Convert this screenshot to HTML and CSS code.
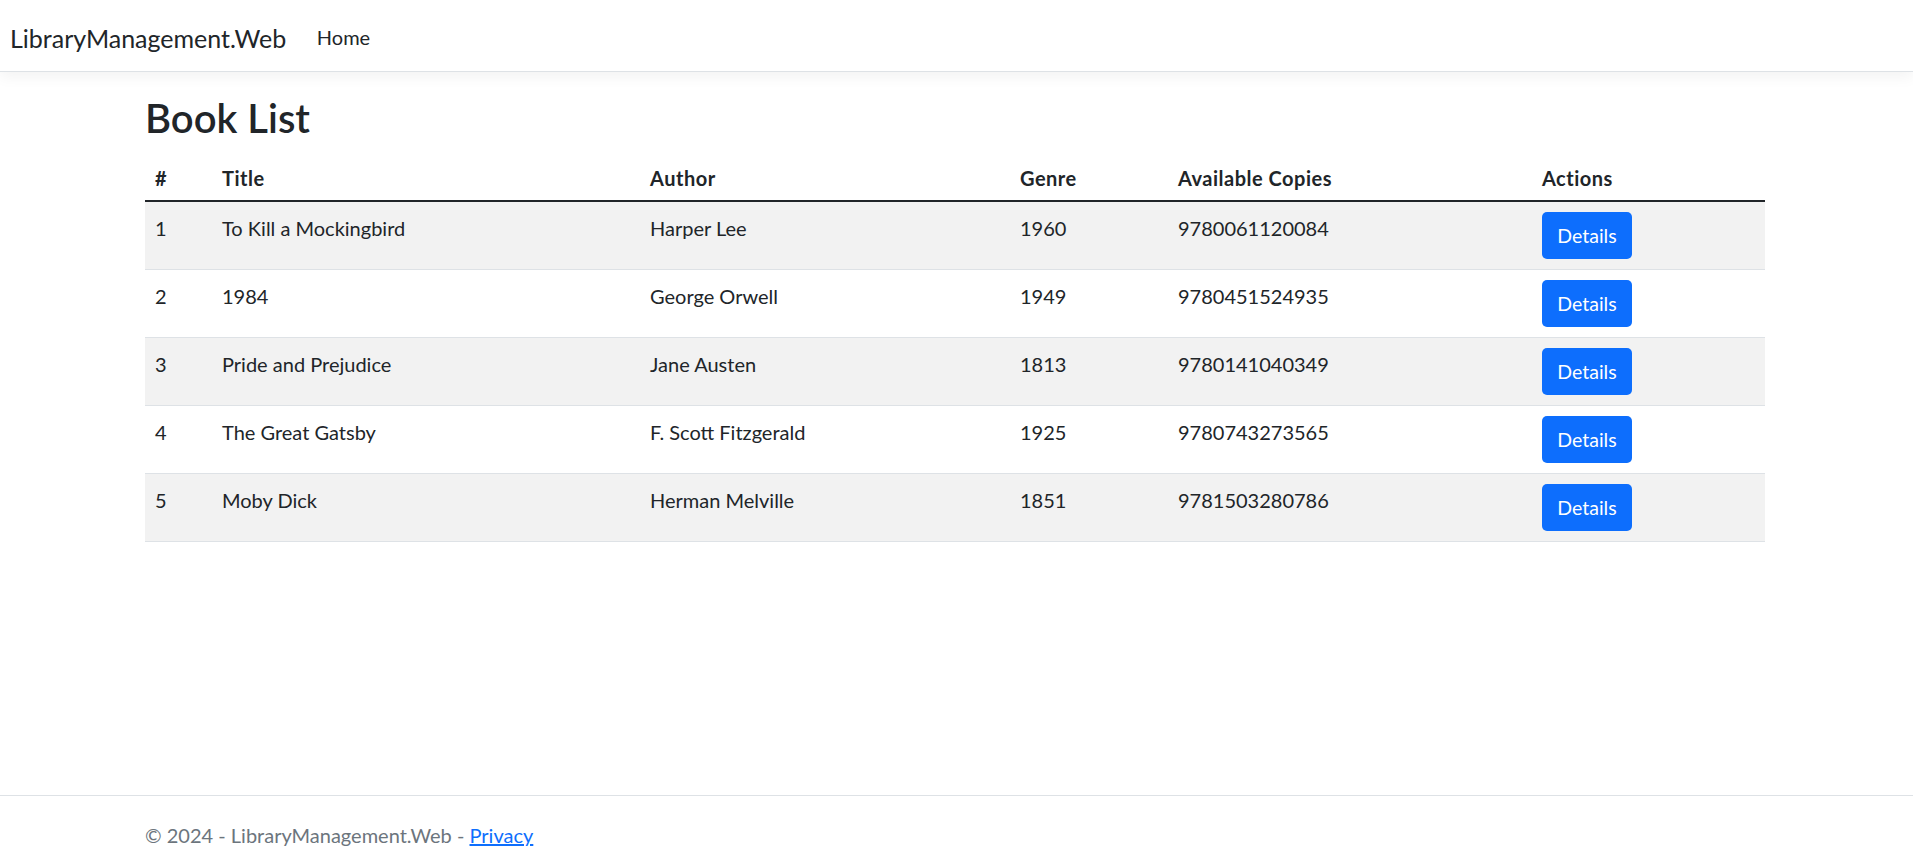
FILE: index.html
```
<!DOCTYPE html>
<html lang="en">
<head>
<meta charset="utf-8">
<title>Book List - LibraryManagement.Web</title>
<link rel="stylesheet" href="styles.css">
</head>
<body>
<header>
  <nav class="navbar">
    <a class="brand" href="#">LibraryManagement.Web</a>
    <ul class="nav">
      <li><a class="nav-link" href="#">Home</a></li>
    </ul>
  </nav>
</header>
<main class="container">
  <h1 class="title">Book List</h1>
  <table class="table">
    <colgroup>
      <col class="c-num"><col class="c-title"><col class="c-author"><col class="c-genre"><col class="c-copies"><col class="c-actions">
    </colgroup>
    <thead>
      <tr><th>#</th><th>Title</th><th>Author</th><th>Genre</th><th>Available Copies</th><th>Actions</th></tr>
    </thead>
    <tbody>
      <tr class="odd"><td>1</td><td>To Kill a Mockingbird</td><td>Harper Lee</td><td>1960</td><td>9780061120084</td><td><a class="btn" href="#">Details</a></td></tr>
      <tr><td>2</td><td>1984</td><td>George Orwell</td><td>1949</td><td>9780451524935</td><td><a class="btn" href="#">Details</a></td></tr>
      <tr class="odd"><td>3</td><td>Pride and Prejudice</td><td>Jane Austen</td><td>1813</td><td>9780141040349</td><td><a class="btn" href="#">Details</a></td></tr>
      <tr><td>4</td><td>The Great Gatsby</td><td>F. Scott Fitzgerald</td><td>1925</td><td>9780743273565</td><td><a class="btn" href="#">Details</a></td></tr>
      <tr class="odd"><td>5</td><td>Moby Dick</td><td>Herman Melville</td><td>1851</td><td>9781503280786</td><td><a class="btn" href="#">Details</a></td></tr>
    </tbody>
  </table>
</main>
<footer class="footer">
  <div class="footer-inner">© 2024 - LibraryManagement.Web - <a href="#">Privacy</a></div>
</footer>
</body>
</html>
```
FILE: styles.css
```
html, body {
  margin: 0;
  padding: 0;
}
body {
  font-family: Lato, "Segoe UI", "Noto Sans", sans-serif;
  font-size: 20px;
  line-height: 1.5;
  color: #212529;
  background: #fff;
  min-height: 100vh;
  display: flex;
  flex-direction: column;
}
a { color: #0d6efd; }

.navbar {
  box-sizing: border-box;
  height: 72px;
  padding: 4px 10px 0 10px;
  border-bottom: 1px solid #dee2e6;
  box-shadow: 0 5px 14px rgba(0, 0, 0, 0.05);
  display: flex;
  align-items: center;
  background: #fff;
}
.brand {
  font-size: 25px;
  line-height: 36px;
  color: #212529;
  text-decoration: none;
  margin-right: 21px;
}
.nav {
  list-style: none;
  margin: 0;
  padding: 0;
  display: flex;
}
.nav-link {
  display: block;
  padding: 0 9.6px;
  color: #212529;
  text-decoration: none;
  line-height: 28.8px;
}

.container {
  flex: 1;
  margin: 22px 148px 0 145px;
}
.title {
  font-size: 40px;
  line-height: 48px;
  font-weight: 600;
  margin: 0 0 10px 0;
}
.table {
  width: 100%;
  border-collapse: collapse;
  table-layout: fixed;
}
.c-num { width: 67px; }
.c-title { width: 428px; }
.c-author { width: 370px; }
.c-genre { width: 158px; }
.c-copies { width: 364px; }
.c-actions { width: 233px; }

.table th {
  text-align: left;
  font-weight: 700;
  letter-spacing: 0.5px;
  padding: 12px 10px 7.6px 10px;
  line-height: 28.8px;
  border-bottom: 2px solid #212529;
}
.table td {
  vertical-align: top;
  padding: 10px 10px;
  line-height: 32px;
  border-bottom: 1px solid #dee2e6;
}
.table tr.odd td {
  background: #f2f2f2;
}
.btn {
  display: inline-block;
  box-sizing: border-box;
  width: 90px;
  height: 47px;
  line-height: 47px;
  font-size: 19.5px;
  text-align: center;
  background: #0d6efd;
  color: #fff;
  border-radius: 5px;
  text-decoration: none;
  vertical-align: top;
}

.footer {
  border-top: 1px solid #dee2e6;
  padding: 25px 0 12px 0;
  color: #6c757d;
  white-space: nowrap;
}
.footer-inner {
  margin: 0 148px 0 145px;
  line-height: 28.8px;
}
.footer a { color: #0d6efd; }
```
